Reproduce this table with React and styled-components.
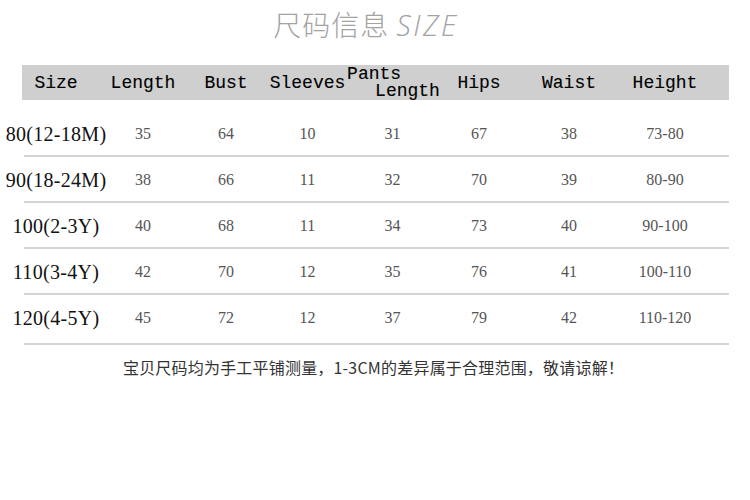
import styled, { createGlobalStyle } from "styled-components";

const GlobalStyle = createGlobalStyle`
  body {
    margin: 0;
    background: #ffffff;
  }
`;

const columns = "88px 86px 80px 83px 87px 86px 94px 98px";

const rows = [
  ["80(12-18M)", "35", "64", "10", "31", "67", "38", "73-80"],
  ["90(18-24M)", "38", "66", "11", "32", "70", "39", "80-90"],
  ["100(2-3Y)", "40", "68", "11", "34", "73", "40", "90-100"],
  ["110(3-4Y)", "42", "70", "12", "35", "76", "41", "100-110"],
  ["120(4-5Y)", "45", "72", "12", "37", "79", "42", "110-120"],
];

const App = () => {
  return (
    <>
      <GlobalStyle />
      <Page>
        <Title>
          尺码信息 <Latin>SIZE</Latin>
        </Title>
        <Header>
          <HeadCell>Size</HeadCell>
          <HeadCell>Length</HeadCell>
          <HeadCell>Bust</HeadCell>
          <HeadCell>Sleeves</HeadCell>
          <TwoLine>
            <span>Pants</span>
            <Indent>Length</Indent>
          </TwoLine>
          <HeadCell>Hips</HeadCell>
          <HeadCell>Waist</HeadCell>
          <HeadCell>Height</HeadCell>
        </Header>
        <Body>
          {rows.map((row, i) => (
            <Row key={row[0]} $last={i === rows.length - 1}>
              <SizeCell>{row[0]}</SizeCell>
              {row.slice(1).map((v, j) => (
                <Cell key={j}>{v}</Cell>
              ))}
            </Row>
          ))}
        </Body>
        <Note>宝贝尺码均为手工平铺测量，1-3CM的差异属于合理范围，敬请谅解！</Note>
      </Page>
    </>
  );
};

const Page = styled.div`
  width: 750px;
  height: 500px;
  display: flex;
  flex-direction: column;
`;
const Title = styled.div`
  height: 48px;
  padding-top: 5px;
  box-sizing: border-box;
  text-align: center;
  padding-right: 18px;
  color: #a3a3a3;
  font-family: "Noto Sans CJK SC", sans-serif;
  font-weight: 300;
  font-size: 28px;
  line-height: 38px;
  letter-spacing: 1px;
`;
const Latin = styled.span`
  font-family: "Open Sans", "DejaVu Sans", sans-serif;
  font-style: italic;
  font-weight: 300;
  font-size: 29px;
  letter-spacing: 2.5px;
`;
const Header = styled.div`
  margin-top: 17px;
  height: 35px;
  display: grid;
  grid-template-columns: ${columns};
  padding-left: 12px;
  align-items: center;
  justify-items: center;
  background: linear-gradient(#cfcfcf, #cfcfcf) no-repeat 22px 0 / 707px 100%;
  font-family: "Liberation Mono", monospace;
  font-size: 18px;
  color: #000;
  -webkit-text-stroke: 0.12px #000;
`;
const HeadCell = styled.div`
  white-space: nowrap;
  line-height: 20px;
`;
const TwoLine = styled.div`
  display: flex;
  flex-direction: column;
  align-items: flex-start;
  line-height: 17px;
  margin-left: 2px;
`;
const Indent = styled.span`
  margin-left: 28px;
`;
const Body = styled.div`
  margin-top: 11px;
  display: flex;
  flex-direction: column;
`;
const Row = styled.div`
  height: ${(p) => (p.$last ? "50px" : "46px")};
  display: grid;
  grid-template-columns: ${columns};
  padding-left: 12px;
  align-items: center;
  justify-items: center;
  padding-bottom: ${(p) => (p.$last ? "4px" : "0")};
  box-sizing: border-box;
  background: linear-gradient(#d4d4d4, #d4d4d4) no-repeat 24px 100% / 705px 2px;
`;
const SizeCell = styled.div`
  white-space: nowrap;
  font-family: "Liberation Serif", serif;
  font-size: 20px;
  letter-spacing: 0.3px;
  color: #111;
`;
const Cell = styled.div`
  white-space: nowrap;
  font-family: "Liberation Serif", serif;
  font-size: 16px;
  color: #555;
`;
const Note = styled.div`
  margin-top: 10px;
  text-align: center;
  padding-right: 3px;
  font-family: "Noto Sans CJK SC", sans-serif;
  font-size: 16px;
  letter-spacing: 0.2px;
  line-height: 24px;
  color: #333;
`;

export default App;
